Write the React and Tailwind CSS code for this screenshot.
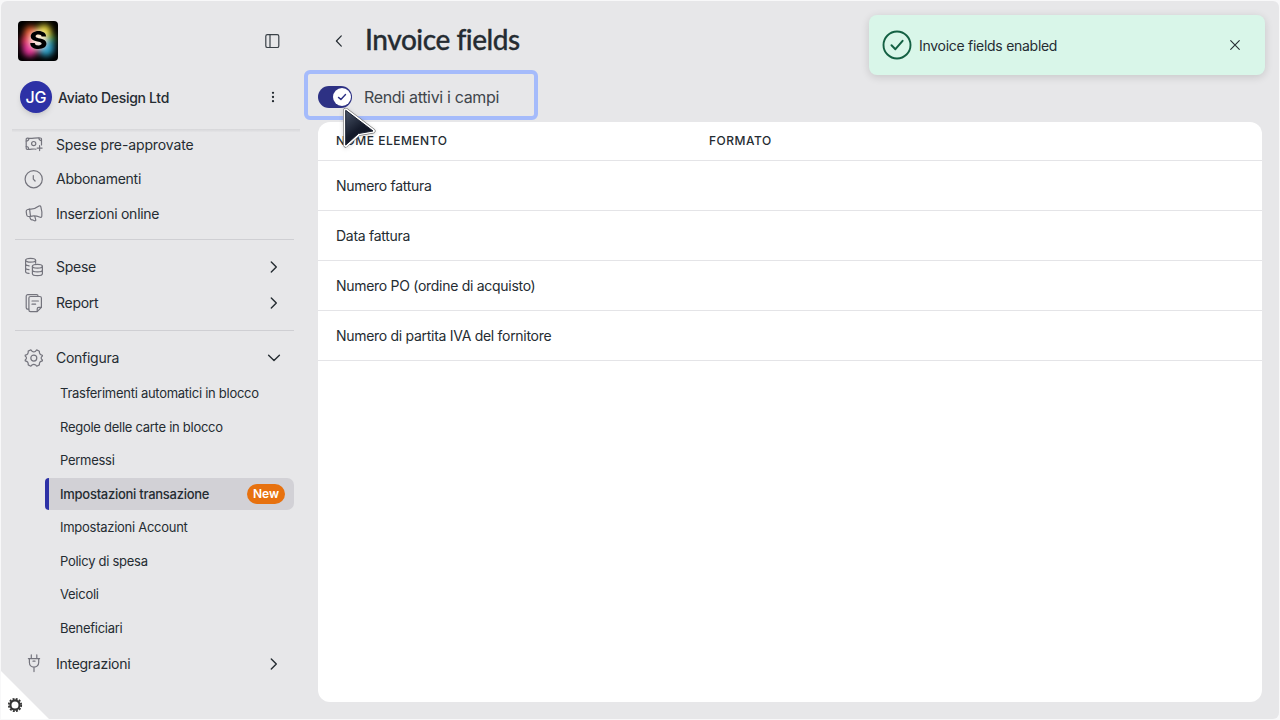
import React from 'react'
import clsx from 'clsx'

const shortcuts = [
  { label: 'Spese pre-approvate', icon: CashIcon, row: 'h-7', text: 'tracking-[-0.120px]' },
  { label: 'Abbonamenti', icon: ClockIcon, row: 'mt-[3px] h-[34px]' },
  { label: 'Inserzioni online', icon: MegaphoneIcon, row: 'mt-px h-[34px]' },
]

const configItems = [
  { label: 'Trasferimenti automatici in blocco' },
  { label: 'Regole delle carte in blocco' },
  { label: 'Permessi' },
  { label: 'Impostazioni transazione', active: true, badge: 'New' },
  { label: 'Impostazioni Account' },
  { label: 'Policy di spesa' },
  { label: 'Veicoli' },
  { label: 'Beneficiari' },
]

const fields = [
  'Numero fattura',
  'Data fattura',
  'Numero PO (ordine di acquisto)',
  'Numero di partita IVA del fornitore',
]

function NavSvg({ children }) {
  return (
    <svg width="20" height="20" viewBox="0 0 20 20" fill="none" stroke="currentColor" strokeWidth="1.200" strokeLinecap="round" strokeLinejoin="round" className="-mr-px shrink-0 text-[#74747d]">
      {children}
    </svg>
  )
}

function CashIcon() {
  return (
    <NavSvg>
      <path d="M12 14.200c-3-.9-5.500.9-9 .1a1 1 0 0 1-.8-1V4.200a1 1 0 0 1 1.200-1c4.600 1 8.400-1 13.200-.2a1 1 0 0 1 .9 1v6" />
      <circle cx="9.700" cy="8.600" r="2.100" />
      <path d="M2.200 6c1.700 0 2.700-1 2.700-2.600M17.500 5.600c-1.600 0-2.500-1-2.600-2.600M2.200 11.500c1.500 0 2.500 1 2.600 2.800" />
      <path d="M15.600 10.600v5M13.100 13.100h5" />
    </NavSvg>
  )
}

function ClockIcon() {
  return (
    <NavSvg>
      <circle cx="9.700" cy="10.200" r="8.600" />
      <path d="M9.300 6.500v3.600l1.800 1.900" />
    </NavSvg>
  )
}

function MegaphoneIcon() {
  return (
    <NavSvg>
      <path d="M5.600 5.100C9.600 5.600 12.500 4 15 2.100c.8-.5 1.500-.3 1.800.6 1 3.400 1.400 6.400 1 9.600-.1.900-.8 1.200-1.600.9-3-1.100-6-1.800-9.700-.9" />
      <path d="M5.600 5.100l.9 7.200-1.900.2c-1 .1-1.700-.5-1.900-1.500l-.5-3.300c-.1-1.100.5-2 1.500-2.200z" />
      <path d="M5.700 12.500l.7 2.300c.3.900 1 1.200 1.900 1l2.200 1c1 .3 1.500-.4 1.200-1.200l-.9-3.200" />
    </NavSvg>
  )
}

function CoinsIcon() {
  return (
    <NavSvg>
      <ellipse cx="6.600" cy="3.300" rx="5" ry="1.900" />
      <path d="M1.600 3.300v11.400c0 .8 1.500 1.500 3.400 1.700M1.600 7.100c0 .9 1.600 1.600 3.500 1.800M1.600 10.900c0 .9 1.600 1.600 3.400 1.700M11.600 3.300v2.900" />
      <ellipse cx="13.400" cy="9.300" rx="5" ry="1.900" />
      <path d="M8.400 9.300v7.400c0 1.100 2.200 1.900 5 1.900s5-.8 5-1.900V9.300M8.400 13c0 1.100 2.200 1.900 5 1.900s5-.8 5-1.900" />
    </NavSvg>
  )
}

function ReportIcon() {
  return (
    <NavSvg>
      <path d="M4.700 16.200h-.9a1.600 1.600 0 0 1-1.600-1.600V3.200a1.600 1.600 0 0 1 1.600-1.600h8.700a1.600 1.600 0 0 1 1.600 1.600" />
      <path d="M6.500 3.500h9.300a1.600 1.600 0 0 1 1.600 1.600v9.200l-4.200 4.300H6.500a1.600 1.600 0 0 1-1.600-1.600V5.100a1.600 1.600 0 0 1 1.600-1.600z" />
      <path d="M17.300 14.300h-2.500a1.600 1.600 0 0 0-1.600 1.600v2.600M8 8h6.400M8 11.200h3.600" />
    </NavSvg>
  )
}

function GearIcon() {
  return (
    <NavSvg>
      <path d="M8 3.200c1 .7 2.600.7 3.600 0l1.100-1.300 2.700 1.300c-.3 2.200.7 3.700 3 4.100V8c-1.700 1.300-1.700 2.700 0 4v.8c-2.300.4-3.300 1.900-3 4.100l-2.700 1.300-1.100-1.300c-1-.7-2.600-.7-3.600 0l-1.100 1.300-2.700-1.300c.3-2.200-.7-3.700-3-4.100V12c1.700-1.300 1.700-2.700 0-4v-.8c2.300-.4 3.300-1.900 3-4.100l2.700-1.300z" />
      <circle cx="9.800" cy="10.100" r="3" />
    </NavSvg>
  )
}

function PlugIcon() {
  return (
    <NavSvg>
      <path d="M7.300.8v3.800M12.800.8v3.800M4.400 4.700h11.200M5.400 4.700v3.900c0 2.700 2 4.600 4.600 4.600s4.700-1.900 4.700-4.600V4.700M10 13.300v4.300M9 7.200h2" />
    </NavSvg>
  )
}

function Chevron({ down }) {
  return (
    <svg width="14" height="14" viewBox="0 0 14 14" fill="none" stroke="#252c32" strokeWidth="1.400" strokeLinecap="round" strokeLinejoin="round">
      <path d={down ? 'M1.600 4.300 7 9.600l5.400-5.300' : 'M4.300 1.900 9.300 7l-5 5.100'} />
    </svg>
  )
}

function Logo() {
  return (
    <div className="relative flex size-10 items-center justify-center overflow-hidden rounded-[4px] bg-black">
      <svg width="40" height="40" viewBox="0 0 40 40" className="absolute inset-0">
        <defs>
          <filter id="glow" x="-30%" y="-30%" width="160%" height="160%">
            <feGaussianBlur stdDeviation="3" />
          </filter>
        </defs>
        <g filter="url(#glow)">
          <circle cx="13" cy="12" r="7" fill="#f0642c" />
          <circle cx="26" cy="11" r="7.500" fill="#ecdc3c" />
          <circle cx="33" cy="18" r="4.500" fill="#3f9c3c" />
          <circle cx="9" cy="20" r="6" fill="#ec3c55" />
          <circle cx="12" cy="28" r="7.500" fill="#ea359c" />
          <circle cx="28" cy="27" r="8" fill="#2fa5cc" />
          <ellipse cx="20" cy="19" rx="7.500" ry="8" fill="#fff0e0" />
        </g>
      </svg>
      <span className="relative -mt-px scale-x-110 font-['Inter',sans-serif] text-[25px] leading-none font-extrabold text-black">S</span>
    </div>
  )
}

function Cursor() {
  return (
    <svg width="38" height="46" viewBox="0 0 38 46" className="absolute top-[105px] left-[340px] drop-shadow-sm">
      <defs>
        <linearGradient id="pointer" x1="0" y1="0" x2="0.6" y2="1">
          <stop offset="0" stopColor="#4a5568" />
          <stop offset="0.6" stopColor="#151b2b" />
          <stop offset="1" stopColor="#0b1020" />
        </linearGradient>
      </defs>
      <path d="M5.700 5.300 33 26 18.500 28.500 5.700 40z" fill="#fff" stroke="#777" strokeWidth="5" strokeLinejoin="round" />
      <path d="M5.700 5.300 33 26 18.500 28.500 5.700 40z" fill="#fff" stroke="#fff" strokeWidth="3.800" strokeLinejoin="round" />
      <path d="M5.700 5.300 33 26 18.500 28.500 5.700 40z" fill="url(#pointer)" stroke="#1a2030" strokeWidth="1" strokeLinejoin="round" />
    </svg>
  )
}

function NavRow({ icon: Icon, label, chevron, open, className, textClass = 'tracking-[-0.270px]' }) {
  return (
    <button className={clsx('flex shrink-0 items-center pr-[13px] pl-[9px] text-left', className)}>
      <Icon />
      <span className={clsx('ml-[13px] flex-1 text-sm', textClass)}>{label}</span>
      {chevron && <Chevron down={open} />}
    </button>
  )
}

function Sidebar() {
  return (
    <aside className="flex w-[317px] shrink-0 flex-col">
      <div className="mt-5 flex items-center justify-between pr-[37px] pl-[17px]">
        <Logo />
        <svg width="16" height="16" viewBox="0 0 16 16" fill="none" stroke="#3a4147" strokeWidth="1.200">
          <rect x="0.800" y="1.700" width="13" height="12.800" rx="1.600" />
          <path d="M5 1.700v12.800" />
        </svg>
      </div>
      <div className="mt-5 flex h-8 items-center pl-[19px]">
        <div className="flex size-8 items-center justify-center rounded-full bg-[#2d31a6] text-base font-medium tracking-[-0.200px] text-white shadow-md">JG</div>
        <span className="ml-[6px] w-[209px] pt-0.5 text-sm font-medium tracking-[-0.320px]">Aviato Design Ltd</span>
        <svg width="12" height="12" viewBox="0 0 12 12" fill="#252c32">
          <circle cx="6" cy="1.800" r="1.150" />
          <circle cx="6" cy="6" r="1.150" />
          <circle cx="6" cy="10.200" r="1.150" />
        </svg>
      </div>
      <div className="mt-4 mr-[18px] -mb-px ml-[11px] h-[3px] shrink-0 bg-linear-to-b from-[#d6d6d9] to-[#e4e4e6]" />

      <nav className="ml-[14px] flex w-[279px] flex-col">
        {shortcuts.map((item) => (
          <NavRow key={item.label} icon={item.icon} label={item.label} className={item.row} textClass={item.text} />
        ))}
        <div className="mt-2 h-px bg-[#cfcfd3]" />
        <NavRow icon={CoinsIcon} label="Spese" chevron className="mt-[9px] h-9" />
        <NavRow icon={ReportIcon} label="Report" chevron className="h-9" />
        <div className="mt-[9px] h-px bg-[#cfcfd3]" />
        <NavRow icon={GearIcon} label="Configura" chevron open className="mt-[9px] h-9" />
        <ul className="mt-px ml-[30px] flex flex-col text-[13px]">
          {configItems.map((item) => (
            <li key={item.label} className="flex h-[33.500px] items-center">
              <div className={clsx('flex h-8 flex-1 items-center justify-between border-l-4 pr-[9px] pl-[11px]', item.active ? 'rounded-l-[4px] rounded-r-[7px] border-[#2d31a6] bg-[#d2d1d6] font-medium' : 'border-transparent')}>
                <span className="tracking-[-0.270px]">{item.label}</span>
                {item.badge && <span className="flex h-5 w-[38px] items-center justify-center rounded-full bg-[#e7710f] text-xs font-semibold text-white">{item.badge}</span>}
              </div>
            </li>
          ))}
        </ul>
        <NavRow icon={PlugIcon} label="Integrazioni" chevron className="h-[38px]" />
      </nav>
    </aside>
  )
}

export default function App() {
  return (
    <div className="relative h-[720px] w-[1280px] overflow-hidden bg-[#f8f8f9] p-px font-['Inter',sans-serif] text-[#252c32]">
      <div className="flex h-[718px] overflow-hidden rounded-[6px] bg-[#e7e7e9]">
        <Sidebar />
        <main className="flex w-[944px] flex-col">
          <header className="mt-5 flex h-10 items-center">
            <svg width="14" height="14" viewBox="0 0 14 14" fill="none" stroke="#252c32" strokeWidth="1.200" strokeLinecap="round" strokeLinejoin="round" className="ml-[14px]">
              <path d="M9.300 1.900 4.400 7l4.900 5.100" />
            </svg>
            <h1 className="mb-1 ml-[19px] font-['Lato',sans-serif] text-[28px] leading-10 font-medium tracking-[-0.450px] whitespace-nowrap [-webkit-text-stroke:0.300px_#252c32]">Invoice fields</h1>
          </header>
          <div className="mt-[9px] -ml-[14px] flex h-[50px] w-[234px] items-center rounded-[6px] border-4 border-[#a5bbfb] pt-[3px] pl-[10px]">
            <div className="flex h-[22px] w-[34px] items-center justify-end rounded-full bg-[#2d3184] pr-px">
              <div className="flex size-[18px] items-center justify-center rounded-full bg-white">
                <svg width="10" height="10" viewBox="0 0 10 10" fill="none" stroke="#2d3184" strokeWidth="1.400" strokeLinecap="round" strokeLinejoin="round">
                  <path d="M1.500 5.400 3.900 7.500 8.500 2.600" />
                </svg>
              </div>
            </div>
            <span className="ml-3 text-base tracking-[-0.330px] text-[#40464c]">Rendi attivi i campi</span>
          </div>
          <section className="mt-[2px] h-[580px] rounded-[12px] bg-white">
            <div className="flex h-[39px] items-center border-b border-[#e4e4e7] px-[18px] text-xs font-medium tracking-[0.500px]">
              <span className="w-[373px]">NOME ELEMENTO</span>
              <span>FORMATO</span>
            </div>
            {fields.map((field) => (
              <div key={field} className="flex h-[50px] items-center border-b border-[#e4e4e7] px-[18px] text-sm tracking-[-0.290px]">{field}</div>
            ))}
          </section>
        </main>
      </div>

      {/* toast */}
      <div className="absolute top-[15px] left-[869px] flex h-[60px] w-[396px] items-center rounded-[8px] bg-[#d9f6e9] pr-[24px] pl-[13px] shadow-[0_2px_8px_rgba(0,0,0,0.14)]">
        <svg width="30" height="30" viewBox="0 0 30 30" fill="none" stroke="#146043" strokeLinecap="round" strokeLinejoin="round">
          <circle cx="15" cy="15" r="13.500" strokeWidth="1.900" />
          <path d="M9.500 15.300 13.400 19.200 20.600 10.800" strokeWidth="2" />
        </svg>
        <span className="ml-[7px] flex-1 pt-0.5 text-sm tracking-[-0.280px]">Invoice fields enabled</span>
        <svg width="12" height="12" viewBox="0 0 12 12" stroke="#252c32" strokeWidth="1.100" strokeLinecap="round">
          <path d="M1.700 1.700l8.600 8.600M10.300 1.700 1.700 10.300" />
        </svg>
      </div>

      {/* settings corner */}
      <svg width="48" height="49" viewBox="0 0 48 49" className="absolute bottom-px left-px">
        <path d="M0 1v48h48z" fill="#fff" />
        <g stroke="#333" fill="none">
          <circle cx="14" cy="35" r="4.600" strokeWidth="2.200" />
          <circle cx="14" cy="35" r="6.200" strokeWidth="1.800" strokeDasharray="1.950 1.296" />
        </g>
      </svg>

      <Cursor />
    </div>
  )
}
